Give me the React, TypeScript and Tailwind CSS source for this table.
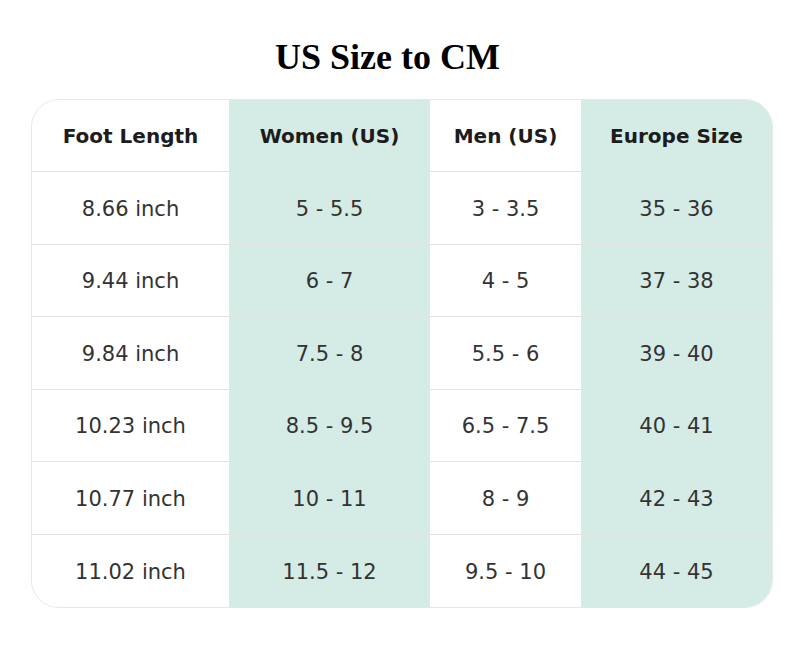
const headers = ["Foot Length", "Women (US)", "Men (US)", "Europe Size"];

const rows = [
  ["8.66 inch", "5 - 5.5", "3 - 3.5", "35 - 36"],
  ["9.44 inch", "6 - 7", "4 - 5", "37 - 38"],
  ["9.84 inch", "7.5 - 8", "5.5 - 6", "39 - 40"],
  ["10.23 inch", "8.5 - 9.5", "6.5 - 7.5", "40 - 41"],
  ["10.77 inch", "10 - 11", "8 - 9", "42 - 43"],
  ["11.02 inch", "11.5 - 12", "9.5 - 10", "44 - 45"],
];

// row heights so the dividers land where the chart has them
const rowHeights = ["h-[72px]", "h-[71px]", "h-[72px]", "h-[71px]", "h-[72px]", "h-[72px]"];

const colWidths = ["w-[197px]", "w-[201px]", "w-[151px]", "w-[191px]"];
const colBg = ["bg-white", "bg-[#d5ebe5]", "bg-white", "bg-[#d5ebe5]"];

export default function App() {
  return (
    <div className="w-[800px] h-[656px] bg-white pt-[39px]">
      <h1
        className="w-[775px] text-center text-[36px] leading-[36px] font-bold text-black"
        style={{ fontFamily: '"Liberation Serif", "Times New Roman", serif' }}
      >
        US Size to CM
      </h1>

      <div
        className="ml-[31px] mt-[24px] w-[742px] rounded-[28px] border border-[#e6e6e6] overflow-hidden"
        style={{ fontFamily: '"DejaVu Sans", Verdana, sans-serif' }}
      >
        <div className="flex border-b border-[#e3e3e3]">
          {headers.map((h, i) => (
            <div
              key={h}
              className={`${colWidths[i]} ${colBg[i]} h-[71px] flex items-center justify-center text-[20px] font-bold text-[#1c1c1c]`}
            >
              {h}
            </div>
          ))}
        </div>

        {rows.map((row, r) => (
          <div
            key={row[0]}
            className={`flex ${r < rows.length - 1 ? "border-b border-[#e3e3e3]" : ""}`}
          >
            {row.map((cell, i) => (
              <div
                key={i}
                className={`${colWidths[i]} ${colBg[i]} ${rowHeights[r]} pt-[3px] flex items-center justify-center text-[21px] text-[#333333]`}
              >
                {cell}
              </div>
            ))}
          </div>
        ))}
      </div>
    </div>
  );
}
